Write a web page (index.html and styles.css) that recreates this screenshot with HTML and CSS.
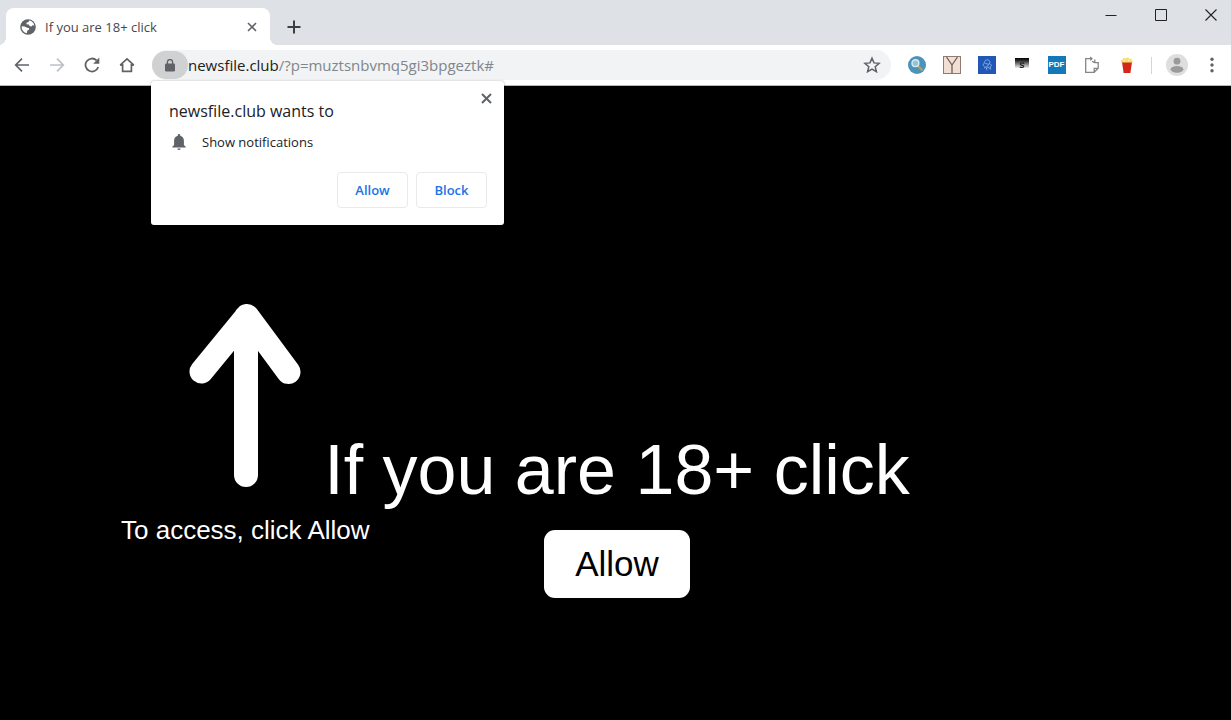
FILE: index.html
```html
<!DOCTYPE html>
<html lang="en">
<head>
  <meta charset="UTF-8">
  <meta name="viewport" content="width=device-width, initial-scale=1.0">
  <title>If you are 18+ click</title>
  <link rel="stylesheet" href="styles.css">
</head>
<body>
  <header class="browser">
    <div class="tab-strip">
      <div class="tab">
        <svg width="16" height="16" viewBox="0 0 16 16">
          <circle cx="8" cy="8" r="7.8" fill="#5f6368"/>
          <path d="M9.2 1.6L8.4 3.2 6.6 3.6 6.4 5.2 8.8 5.4 9.6 7 11.4 7.6 12.6 6.2 14.3 6.6A6.4 6.4 0 0 0 9.2 1.6z" fill="#fff"/>
          <path d="M1.7 7.2L4.6 7.4 7.2 8.8 9 9 9.2 10.6 7.4 11.4 6.8 14.3A6.4 6.4 0 0 1 1.7 7.2z" fill="#fff"/>
        </svg>
        <span class="tab-title">If you are 18+ click</span>
        <button class="tab-close" aria-label="Close tab">
          <svg width="10" height="10" viewBox="0 0 10 10"><path d="M1 1l8 8M9 1L1 9" stroke="#5f6368" stroke-width="1.6"/></svg>
        </button>
      </div>
      <button class="new-tab" aria-label="New tab">
        <svg width="14" height="14" viewBox="0 0 14 14"><path d="M7 .5v13M.5 7h13" stroke="#3c4043" stroke-width="2"/></svg>
      </button>
      <div class="window-controls">
        <button aria-label="Minimize"><svg width="12" height="12" viewBox="0 0 12 12"><path d="M.5 6.5h11" stroke="#222" stroke-width="1"/></svg></button>
        <button aria-label="Maximize"><svg width="12" height="12" viewBox="0 0 12 12"><path d="M.5.5h11v11H.5z" fill="none" stroke="#222"/></svg></button>
        <button aria-label="Close"><svg width="12" height="12" viewBox="0 0 12 12"><path d="M.5.5l11 11M11.5.5l-11 11" stroke="#222" stroke-width="1.1"/></svg></button>
      </div>
    </div>

    <div class="toolbar">
      <button class="tool" aria-label="Back">
        <svg width="16" height="16" viewBox="0 0 16 16"><path d="M15 8H2M8 1.7L1.7 8 8 14.3" fill="none" stroke="#5f6368" stroke-width="1.7"/></svg>
      </button>
      <button class="tool" aria-label="Forward">
        <svg width="16" height="16" viewBox="0 0 16 16"><path d="M1 8h13M8 1.7L14.3 8 8 14.3" fill="none" stroke="#bdc1c6" stroke-width="1.7"/></svg>
      </button>
      <button class="tool" aria-label="Reload">
        <svg width="16" height="16" viewBox="0 0 16 16"><path d="M14.2 10A6.5 6.5 0 1 1 12.6 3.4" fill="none" stroke="#5f6368" stroke-width="1.8"/><path d="M15.3.6v6.1H9.2z" fill="#5f6368"/></svg>
      </button>
      <button class="tool" aria-label="Home">
        <svg width="16" height="16" viewBox="0 0 16 16"><path d="M1.2 8.2L8 1.8l6.8 6.4M3.6 7v7.3h8.8V7M1.2 8.2h2.4M12.4 8.2h2.4" fill="none" stroke="#5f6368" stroke-width="1.7"/></svg>
      </button>

      <div class="omnibox">
        <button class="site-info" aria-label="View site information">
          <svg width="10" height="13" viewBox="0 0 10 13"><rect y="4.4" width="10" height="8.1" rx="1.2" fill="#5f6368"/><path d="M2.4 5V3.2a2.6 2.6 0 0 1 5.2 0V5" fill="none" stroke="#5f6368" stroke-width="1.3"/></svg>
        </button>
        <span class="url"><span class="host">newsfile.club</span>/?p=muztsnbvmq5gi3bpgeztk#</span>
        <button class="bookmark" aria-label="Bookmark this page">
          <svg width="18" height="18" viewBox="0 0 18 18"><path d="M9 2.2l2 4.7 5.1.4-3.9 3.4 1.2 5L9 13.1l-4.4 2.6 1.2-5L1.9 7.3 7 6.9z" fill="none" stroke="#5f6368" stroke-width="1.5"/></svg>
        </button>
      </div>

      <button class="tool" aria-label="Search extension">
        <svg width="18" height="18" viewBox="0 0 18 18"><circle cx="9" cy="9" r="9" fill="#4c93b8"/><path d="M9.8 9.8l4.6 4.6" stroke="#c29a5c" stroke-width="2.2"/><circle cx="7.4" cy="7.2" r="3.4" fill="#8cc5e2" stroke="#dcebf1" stroke-width="1.4"/></svg>
      </button>
      <button class="tool" aria-label="Y extension">
        <svg width="18" height="18" viewBox="0 0 18 18"><rect x=".5" y=".5" width="17" height="17" fill="#f1dfd4" stroke="#907b74"/><path d="M3.5 1L9 9l5.5-8M9 8.5V17" fill="none" stroke="#6b5650" stroke-width="1.2"/></svg>
      </button>
      <button class="tool" aria-label="Blue extension">
        <svg width="18" height="18" viewBox="0 0 18 18"><rect width="18" height="18" fill="#2258b5"/><path d="M6.5 10.5C4.5 9.5 5 7.5 6.4 7.3 6 4.5 9 3 10.8 4.3c1.8 1.1 1 2.6.2 3.2 2.2.2 3 2 1.6 3.3M7.2 7.2l3.6 1.3-2 2.2 3 1.8M6 12.2l2-1.4 1 3.5M12 10.5l.7 3" fill="none" stroke="#8db6ed" stroke-width=".9"/></svg>
      </button>
      <button class="tool" aria-label="S extension">
        <svg width="14" height="14" viewBox="0 0 14 14"><defs><linearGradient id="fade" x1="0" y1="0" x2="0" y2="1"><stop offset="0" stop-color="#000"/><stop offset=".3" stop-color="#333"/><stop offset="1" stop-color="#eee"/></linearGradient></defs><rect width="14" height="10" fill="url(#fade)"/><path d="M9.2 5.6C8 4.6 5.3 4.8 5.3 6.2c0 1.5 3.7.8 3.5 2.3C8.6 9.8 6 9.7 4.8 8.9" fill="none" stroke="#222" stroke-width="1.2"/></svg>
      </button>
      <button class="tool" aria-label="PDF extension"><span class="pdf">PDF</span></button>
      <button class="tool" aria-label="Page extension">
        <svg width="16" height="18" viewBox="0 0 16 18"><path d="M4.6 2.7H1.7v13.6h8.5l4-4V6.6h-3.4V3.4M10.2 16.3v-4h4M4.600 2.700h3M6.200 1l1.800 1.700-1.800 1.700M8 5.400l2.800 1.200" fill="none" stroke="#868686" stroke-width="1.3"/></svg>
      </button>
      <button class="tool" aria-label="Popcorn extension">
        <svg width="14" height="18" viewBox="0 0 14 18"><path d="M2 6l1.6 11h6.8L12 6z" fill="#d42619"/><path d="M1.2 6.6C.6 4.5 1.7 3.5 2.7 3.6 2.9 1.8 5 1.3 5.8 2.5 7 .9 9 1.2 9.3 3c1.8-.8 3.7.8 3.3 3.6z" fill="#f4e16c"/><path d="M4.3 4.2l.8.8M8.3 3.8l.9 1" stroke="#fff8ba" stroke-width="1.2"/></svg>
      </button>
      <div class="divider"></div>
      <button class="tool" aria-label="Profile">
        <svg width="22" height="22" viewBox="0 0 22 22"><circle cx="11" cy="11" r="11" fill="#dedede"/><circle cx="11" cy="7.2" r="3.4" fill="#9a9a9a"/><ellipse cx="11" cy="15.3" rx="6.4" ry="3.4" fill="#9a9a9a"/></svg>
      </button>
      <button class="tool" aria-label="Menu">
        <svg width="4" height="16" viewBox="0 0 4 16" fill="#5f6368"><circle cx="2" cy="2.2" r="1.7"/><circle cx="2" cy="8" r="1.7"/><circle cx="2" cy="13.8" r="1.7"/></svg>
      </button>
    </div>

    <div class="prompt" role="dialog" aria-labelledby="prompt-title">
      <button class="prompt-close" aria-label="Close">
        <svg width="11" height="11" viewBox="0 0 11 11"><path d="M1 1l9 9M10 1l-9 9" stroke="#5f6368" stroke-width="2"/></svg>
      </button>
      <div class="prompt-title" id="prompt-title">newsfile.club wants to</div>
      <div class="permission">
        <svg width="14" height="16" viewBox="0 0 14 16" fill="#5f6368"><path d="M7 0a1.2 1.2 0 0 1 1.2 1.3v.5C10.6 2.4 11.9 4.4 11.9 6.8V11l1.8 1.8v.8H.3v-.8L2.1 11V6.8c0-2.4 1.3-4.4 3.7-5V1.3A1.2 1.2 0 0 1 7 0z"/><path d="M5.4 14.4h3.2a1.6 1.6 0 0 1-3.2 0z"/></svg>
        <span>Show notifications</span>
      </div>
      <div class="prompt-actions">
        <button>Allow</button>
        <button>Block</button>
      </div>
    </div>
  </header>

  <main class="page">
    <div class="hint">
      <svg width="112" height="184" viewBox="0 0 112 184"><path d="M12.5 68.5L58 13l41.5 56M57 14v158" fill="none" stroke="#fff" stroke-width="24" stroke-linecap="round" stroke-linejoin="round"/></svg>
      <p>To access, click Allow</p>
    </div>
    <h1>If you are 18+ click</h1>
    <button class="allow">Allow</button>
  </main>
</body>
</html>
```
FILE: styles.css
```css
:root {
  --color-frame: #dee1e6;
  --color-text: #202124;
  --color-link: #1a73e8;
}

* {
  margin: 0;
  padding: 0;
  box-sizing: border-box;
}

body {
  display: flex;
  flex-direction: column;
  min-height: 100vh;
  background: #000;
  font-family: 'Segoe UI', 'Open Sans', 'Noto Sans', sans-serif;
}

button {
  border: none;
  background: none;
  font-family: inherit;
  cursor: pointer;
}

svg {
  display: block;
}

.browser {
  position: relative;
}

.tab-strip {
  display: flex;
  height: 45px;
  padding: 8px 0 0 6px;
  background: var(--color-frame);
}

.tab {
  position: relative;
  display: flex;
  align-items: center;
  width: 264px;
  padding: 0 12px 0 14px;
  border-radius: 8px 8px 0 0;
  background: #fff;
}

/* curved feet of the active tab */
.tab::before,
.tab::after {
  content: '';
  position: absolute;
  bottom: 0;
  width: 8px;
  height: 8px;
}

.tab::before {
  left: -8px;
  background: radial-gradient(circle at 0 0, transparent 8px, #fff 8px);
}

.tab::after {
  right: -8px;
  background: radial-gradient(circle at 100% 0, transparent 8px, #fff 8px);
}

.tab-title {
  flex: 1;
  margin-left: 9px;
  color: #45494d;
  font-size: 13px;
}

.tab-close {
  display: grid;
  place-items: center;
  width: 12px;
  height: 16px;
}

.new-tab {
  display: grid;
  place-items: center;
  width: 28px;
  margin-left: 10px;
}

.window-controls {
  display: flex;
  gap: 10px;
  margin: -8px 0 0 auto;
}

.window-controls button {
  display: grid;
  place-items: center;
  width: 40px;
  height: 30px;
}

.toolbar {
  display: flex;
  align-items: center;
  height: 41px;
  padding: 0 2px 0 4px;
  border-bottom: 1px solid #b5b7ba;
  background: #fff;
}

.tool {
  flex: none;
  display: grid;
  place-items: center;
  width: 35px;
  height: 30px;
}

.omnibox {
  flex: 1;
  display: flex;
  align-items: center;
  height: 30px;
  margin: 0 8px;
  border-radius: 15px;
  background: #f1f3f4;
}

.site-info {
  display: grid;
  place-items: center;
  width: 36px;
  height: 28px;
  border-radius: 14px;
  background: #cfd1d2;
}

.url {
  flex: 1;
  color: #80868b;
  font-size: 15px;
}

.host {
  color: var(--color-text);
}

.bookmark {
  margin-right: 10px;
}

.pdf {
  width: 18px;
  background: #1379b8;
  color: #fff;
  font-family: Arial, 'Liberation Sans', sans-serif;
  font-size: 8px;
  font-weight: 700;
  line-height: 18px;
  text-align: center;
}

.divider {
  width: 1px;
  height: 17px;
  margin: 0 7px;
  background: #d3d5d8;
}

.prompt {
  position: absolute;
  top: 81px;
  left: 151px;
  width: 353px;
  padding: 17px 17px 17px 18px;
  border-radius: 3px;
  background: #fff;
  box-shadow: 0 0 2px rgba(0, 0, 0, 0.4);
  color: var(--color-text);
}

.prompt-close {
  position: absolute;
  top: 12px;
  right: 12px;
}

.prompt-title {
  font-size: 16px;
  line-height: 26px;
}

.permission {
  display: flex;
  align-items: center;
  gap: 16px;
  margin: 8px 0 20px;
  padding-left: 3px;
  font-size: 13px;
  line-height: 20px;
}

.prompt-actions {
  display: flex;
  justify-content: flex-end;
  gap: 8px;
}

.prompt-actions button {
  width: 71px;
  height: 36px;
  border: 1px solid #e8eaed;
  border-radius: 4px;
  color: var(--color-link);
  font-size: 13px;
  font-weight: 600;
}

.page {
  position: relative;
  flex: 1;
  display: flex;
  flex-direction: column;
  align-items: center;
  padding: 344px 0 0 3px;
  color: #fff;
  font-family: Arial, 'Liberation Sans', sans-serif;
}

.hint {
  position: absolute;
  top: 217px;
  left: 121px;
  display: flex;
  flex-direction: column;
  align-items: center;
  gap: 27px;
  font-size: 26px;
  line-height: 32px;
}

h1 {
  font-size: 70px;
  font-weight: 400;
  line-height: 80px;
}

.allow {
  margin-top: 20px;
  padding: 0 31px;
  border-radius: 11px;
  background: #fff;
  color: #000;
  font-family: inherit;
  font-size: 35px;
  line-height: 68px;
}
```
